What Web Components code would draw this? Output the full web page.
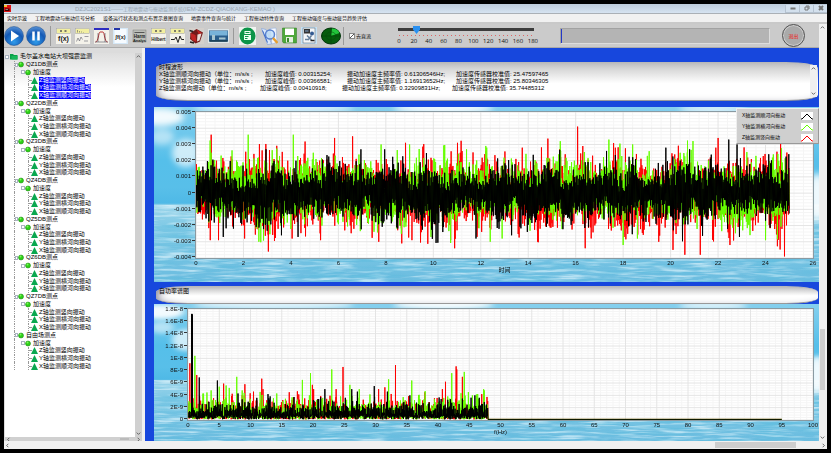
<!DOCTYPE html>
<html lang="zh-CN">
<head>
<meta charset="utf-8">
<title>DZJC2021S1</title>
<style>
  html, body { height: 100%; }
  body {
    margin: 0;
    background: #000;
    color: #111;
    font: 6px/8px 'Liberation Sans', 'Noto Sans CJK SC', sans-serif;
  }
</style>
</head>
<body>
<monitor-app></monitor-app>

<script>
const define = (name, html, setup) => {
  const template = document.createElement('template');
  template.innerHTML = html;
  window.customElements.define(name, class extends HTMLElement {
    constructor() {
      super();
      this.attachShadow({ mode: 'open' });
      this.shadowRoot.appendChild(template.content.cloneNode(true));
    }

    connectedCallback() {
      if (setup) setup(this, this.shadowRoot);
    }
  });
};

// small repeatable random generator, so the traces stay the same on reload
const random = seed => () => {
  seed = (seed * 1664525 + 1013904223) % 4294967296;
  return seed / 4294967296;
};

/* ---------- scroll bar ---------- */
define('scroll-bar', `
  <style>
    :host { display: flex; background: #f0f0f0; }
    :host([vertical]) { flex-direction: column; width: 7px; }
    :host(:not([vertical])) { height: 8px; }
    svg { width: 7px; height: 7px; flex: none; align-self: center; fill: none; stroke: #555; }
    .thumb { background: var(--thumb, #cdcdcd); }
    :host([vertical]) .thumb { margin: 0 1px; }
    :host(:not([vertical])) .thumb { margin: 1px 0; }
  </style>
  <svg viewBox="0 0 8 8"><path id="a"/></svg>
  <div id="before"></div><div class="thumb"></div><div id="after"></div>
  <svg viewBox="0 0 8 8"><path id="b"/></svg>
`, (el, root) => {
  const vertical = el.hasAttribute('vertical');
  root.querySelector('#a').setAttribute('d', vertical ? 'M2 5l2-2 2 2' : 'M5 2l-2 2 2 2');
  root.querySelector('#b').setAttribute('d', vertical ? 'M2 3l2 2 2-2' : 'M3 2l2 2-2 2');
  const start = Number(el.getAttribute('start') || 0);
  const size = Number(el.getAttribute('size') || 0);
  root.querySelector('#before').style.flex = start;
  root.querySelector('.thumb').style.flex = size;
  root.querySelector('#after').style.flex = 100 - start - size;
});

/* ---------- title bar ---------- */
define('title-bar', `
  <style>
    :host { display: flex; align-items: center; height: 10px; background: linear-gradient(#bccbda, #d6e3f1); border-bottom: 1px solid #aab0b6; box-sizing: border-box; }
    .logo { width: 7px; height: 7px; }
    h1 { flex: 1; margin: 0 0 0 64px; font: 6px/8px 'Liberation Sans', 'Noto Sans CJK SC', sans-serif; color: #98a4b0; white-space: pre; }
    h1 span { font-size: 5px; }
    button { width: 14px; height: 8px; padding: 0; border: 1px solid #b5c2d0; border-width: 0 0 1px 1px; background: #d3e0ed; display: flex; justify-content: center; align-items: center; }
    button svg { width: 8px; height: 6px; fill: none; stroke: #777; }
  </style>
  <svg class="logo" viewBox="0 0 14 14"><rect width="14" height="14" fill="#d11"/><path d="M0 0h6v4H0z" fill="#f6c22d"/><path d="M2 7h9v5H2z" fill="#400"/><path d="M3 9h5" stroke="#fff"/></svg>
  <h1>DZJC2021S1------<span><slot></slot></span>(IEM-ZCDZ-QIAOKANG-KEMAO )</h1>
  <button aria-label="最小化"><svg viewBox="0 0 8 6"><rect x="2" y="3" width="4" height="1"/></svg></button>
  <button aria-label="还原"><svg viewBox="0 0 8 6"><path d="M2 2h3v3H2zM3 1h3v3"/></svg></button>
  <button aria-label="关闭"><svg viewBox="0 0 8 6"><path d="M2 1l4 4M6 1L2 5" stroke-width="2"/></svg></button>
`);

/* ---------- menu ---------- */
define('menu-bar', `
  <style>
    :host { display: block; background: #f1f1f1; border-bottom: 2px solid #c9c9c9; }
    nav { display: flex; gap: 8px; padding: 0 3px; }
    button { border: 0; padding: 0; background: none; font: 5px/8px 'Noto Sans CJK SC', sans-serif; color: #000; white-space: nowrap; }
  </style>
  <nav>
    <button>实时示波</button>
    <button>工程地震动与振动信号分析</button>
    <button>设备运行状态和测点布置示意图查询</button>
    <button>地震事件查询与统计</button>
    <button>工程振动特性查询</button>
    <button>工程振动强度与振动疲劳趋势评估</button>
  </nav>
`);

/* ---------- toolbar ---------- */
const page = body => `<rect width="30" height="32" fill="#f4f2ea"/>${body}`;
const banner = '<rect x="1" y="1" width="28" height="10" fill="#f2efa0" stroke="#99a"/><path d="M8 6h4M17 6h4" stroke="#555" stroke-width="3"/>';
const caption = (text, size, y) => `<text x="15" y="${y}" font-size="${size}" font-weight="bold" text-anchor="middle" fill="#222">${text}</text>`;

const ICONS = {
  play: '<circle cx="20" cy="20" r="19" fill="url(#orb)" stroke="#1a4d8c"/><path d="M14 9l16 11-16 11z" fill="#fff"/>',
  pause: '<circle cx="20" cy="20" r="19" fill="url(#orb)" stroke="#1a4d8c"/><path d="M15 11v18M25 11v18" stroke="#fff" stroke-width="5"/>',
  func: page(banner + caption('f(x)', 14, 26)),
  filter: page('<rect x="1" y="1" width="28" height="10" fill="#f2efa0" stroke="#99a"/><path d="M5 4v5M9 6v3M13 7v2M17 8v1M3 27l3-7 3 6 3-8 3 5M18 26h8M19 17h8" stroke="#445" fill="none"/>'),
  windowing: page('<rect width="30" height="4" fill="#2c2cc0"/><path d="M3 28c6 0 6-20 9-20h6c3 0 3 20 9 20" fill="none" stroke="#b33" stroke-width="2"/><path d="M8 28V10M22 28V10M2 28h26" stroke="#334"/>'),
  integral: '<rect width="30" height="32" fill="#d5e8f7"/><rect x="3" y="2" width="24" height="28" fill="#f7fbff"/><path d="M2 2h12" stroke="#2435a8" stroke-width="4"/>' + caption('∫f(x)', 11, 21),
  params: '<rect width="30" height="32" fill="#cfcfcb"/><rect x="2" y="4" width="26" height="24" fill="#bbbeb8" stroke="#777"/><path d="M5 9h20" stroke="#555" stroke-width="2"/>' + caption('Harm', 9, 19) + caption('Analys', 8, 27),
  hilbert: page(banner + caption('Hilbert', 9, 25)),
  pulse: page(banner + '<path d="M2 23h7l3-5 4 11 4-13 3 7h5" fill="none" stroke="#222" stroke-width="2"/>'),
  book: '<rect width="30" height="32" fill="#d4d0cc"/><path d="M3 10L15 2l13 7-6 18-9 4L2 22z" fill="#711a1a"/><path d="M3 10l10 4 2 14-10-5zM15 3l11 7-6 3z" fill="#c02424"/><path d="M17 13l8-2-4 14-5 2z" fill="#e9dcd6"/><path d="M1 5l7 2M2 28l8 2" stroke="#222" stroke-width="3"/>',
  photo: '<rect y="2" width="42" height="28" fill="#dfe7ea"/><rect x="2" y="5" width="38" height="22" fill="#2a5e8b"/><path d="M3 6h36v9H3z" fill="#78b3d9"/><path d="M8 24V14h6v10M22 19h13v4H22z" fill="#a9c6cf"/><path d="M3 26h36" stroke="#173a4d" stroke-width="3"/>',
  report: '<rect width="34" height="36" fill="#f1f3f1"/><ellipse cx="17" cy="18" rx="16" ry="17" fill="#0c9448"/><path d="M11 8h12v6H11zM10 16h14v10H10z" fill="#eafff2"/><path d="M12 19h7M12 23h5M13 11h8" stroke="#0c9448" stroke-width="2"/>',
  search: '<path d="M3 3l9 2 11 29-8 1z" fill="#dbe9fb" stroke="#6c93d6"/><path d="M20 3l12-1 2 28-10 4z" fill="#f5f8ff" stroke="#89a9dd"/><circle cx="20" cy="15" r="9" fill="#bfe0fb" fill-opacity=".8" stroke="#5a82cf" stroke-width="3"/><path d="M26 22l9 10" stroke="#e79f2f" stroke-width="5"/><path d="M5 7l10 24" stroke="#3b68c4" stroke-width="2"/>',
  save: '<path d="M1 2h28v30H3l-2-3z" fill="#4fa83b" stroke="#2c7a21"/><path d="M6 3h18v13H6z" fill="#fff"/><path d="M8 20h14v11H8z" fill="#e4efe0"/><path d="M10 22h4v8h-4z" fill="#3b8a2c"/>',
  config: '<rect width="32" height="34" fill="#c6e2f5"/><rect x="4" y="2" width="24" height="30" fill="#f4f7f9" stroke="#456"/><rect x="6" y="4" width="12" height="9" fill="#333"/><path d="M8 8h7M8 25h8M12 17l9 9M21 17l-7 9" stroke="#67809b" stroke-width="3"/><circle cx="22" cy="13" r="4" fill="#335a91"/><path d="M19 27h8" stroke="#222" stroke-width="3"/>',
  radar: '<ellipse cx="20" cy="18" rx="19" ry="16" fill="#055c0c" stroke="#02340a" stroke-width="2"/><path d="M20 18L22 3c8 0 13 4 15 9z" fill="#22c43b"/><path d="M2 18h36M20 3v30" stroke="#063f0b"/><ellipse cx="20" cy="18" rx="10" ry="8" fill="none" stroke="#08470d"/>'
};

define('tool-button', `
  <style>
    :host { display: block; flex: none; }
    button { display: block; border: 0; padding: 0; background: none; }
    svg { display: block; font-family: 'Liberation Sans', sans-serif; }
  </style>
  <button><svg>
    <defs><radialGradient id="orb" cx=".5" cy=".8" r=".8"><stop offset="0" stop-color="#2f9bea"/><stop offset=".6" stop-color="#1459b5"/><stop offset="1" stop-color="#5a93d6"/></radialGradient></defs>
    <g></g>
  </svg></button>
`, (el, root) => {
  const [width, height] = (el.getAttribute('size') || '15 16').split(' ');
  const svg = root.querySelector('svg');
  svg.setAttribute('width', width);
  svg.setAttribute('height', height);
  svg.setAttribute('viewBox', `0 0 ${width * 2} ${height * 2}`);
  root.querySelector('g').innerHTML = ICONS[el.getAttribute('icon')];
  root.querySelector('button').setAttribute('aria-label', el.getAttribute('label'));
});

define('range-scale', `
  <style>
    :host { display: block; width: 144px; }
    input { appearance: none; display: block; width: 100%; height: 8px; margin: 0; background: linear-gradient(#3c3c3c, #3c3c3c) center 2px / 136px 3px no-repeat; }
    input::-webkit-slider-thumb { appearance: none; width: 7px; height: 8px; background: #2a90f0; clip-path: polygon(0 0, 100% 0, 100% 45%, 50% 100%, 0 45%); }
    .ticks { height: 3px; margin: 0 5px; background: repeating-linear-gradient(90deg, #d66 0 1px, transparent 1px 4px) 0 1px / 100% 1px no-repeat; }
    .labels { display: flex; justify-content: space-between; margin: 0 5px; }
    .labels span { width: 0; display: flex; justify-content: center; font: 6px/8px 'Open Sans', sans-serif; }
  </style>
  <input type="range" min="0" max="180" value="25" aria-label="时长">
  <div class="ticks"></div>
  <div class="labels"></div>
`, (el, root) => {
  const labels = [];
  for (let i = 0; i <= 180; i += 20) labels.push(`<span>${i}</span>`);
  root.querySelector('.labels').innerHTML = labels.join('');
});

define('tool-bar', `
  <style>
    :host { display: flex; align-items: center; height: 24px; background: #cbcbcb; border-bottom: 1px solid #aaa; box-sizing: border-box; }
    .group { display: flex; align-items: center; gap: 4px; padding: 0 4px 0 5px; border-right: 1px solid #999; }
    .run { gap: 2px; padding: 0 4px 0 0; }
    .last { padding-right: 2px; }
    label { display: flex; align-items: center; gap: 1px; width: 50px; padding-left: 5px; box-sizing: border-box; font: 5px/8px 'Noto Sans CJK SC', sans-serif; }
    input { appearance: none; width: 6px; height: 6px; margin: 0; border: 1px solid #888; background: #fff; box-sizing: border-box; }
    input:checked { background: linear-gradient(135deg, #fff 40%, #555 40% 60%, #fff 60%); }
    .progress { flex: 1; height: 14px; margin: 0 12px 0 22px; background: #b4b4b4; border: 1px solid #a2a2a2; border-right-color: #ddd; border-bottom-color: #ddd; }
    .progress div { width: 1px; height: 100%; background: #2338c8; }
    .exit { width: 23px; height: 23px; margin-right: 14px; padding: 0; border: 1px solid #555; border-radius: 50%; background: #aaa; box-shadow: inset 0 0 0 1px #ccc; color: #f01818; font: 5px/8px 'Noto Sans CJK SC', sans-serif; }
  </style>
  <div class="group run">
    <tool-button icon="play" size="20 20" label="开始"></tool-button>
    <tool-button icon="pause" size="20 20" label="暂停"></tool-button>
  </div>
  <div class="group">
    <tool-button icon="func" label="函数"></tool-button>
    <tool-button icon="filter" label="滤波"></tool-button>
    <tool-button icon="windowing" label="加窗"></tool-button>
    <tool-button icon="integral" label="积分"></tool-button>
    <tool-button icon="params" label="谐波分析"></tool-button>
    <tool-button icon="hilbert" label="希尔伯特"></tool-button>
    <tool-button icon="pulse" label="脉冲"></tool-button>
    <tool-button icon="book" label="文档"></tool-button>
    <tool-button icon="photo" size="21 16" label="图片"></tool-button>
  </div>
  <div class="group last">
    <tool-button icon="report" size="17 18" label="报告"></tool-button>
    <tool-button icon="search" size="18 18" label="查询"></tool-button>
    <tool-button icon="save" size="15 17" label="保存"></tool-button>
    <tool-button icon="config" size="16 17" label="设置"></tool-button>
    <tool-button icon="radar" size="20 18" label="扫描"></tool-button>
  </div>
  <label><input type="checkbox" checked>去直流</label>
  <range-scale></range-scale>
  <div class="progress"><div></div></div>
  <button class="exit">退出</button>
`);

/* ---------- point tree ---------- */
define('tree-row', `
  <style>
    :host { display: flex; flex: 1; align-items: center; padding-left: 9px; white-space: nowrap; color: #000; font: 6px/7px 'Liberation Sans', 'Noto Sans CJK SC', sans-serif; }
    :host([level="0"]) { padding-left: 0; }
    i { align-self: stretch; box-sizing: border-box; flex: none; }
    .trunk { border-left: 1px dotted #999; }
    .joint { display: flex; align-items: center; }
    .joint::before { content: ''; width: 100%; border-top: 1px dotted #999; }
    .box::before { width: 2px; height: 2px; border: 1px solid #a9b3c0; background: #fff; }
    svg { flex: none; height: 7px; }
    :host([selected]) span { background: #00f; color: #fff; }
  </style>
  <svg></svg><span><slot></slot></span>
`, (el, root) => {
  const level = el.getAttribute('level');
  const guides = {
    0: '<i class="joint box" style="width:5px"></i>',
    1: '<i class="trunk joint box" style="width:4px"></i>',
    2: '<i class="trunk" style="width:7px"></i><i class="joint box" style="width:4px"></i>',
    3: '<i class="trunk" style="width:14px"></i><i class="trunk joint" style="width:3px"></i>'
  };
  const shapes = {
    0: '<path d="M0 2h6l2 2h7v9H0z" fill="#0aa148"/><path d="M3 6h12v7H3z" fill="#18b75a"/>',
    1: '<circle cx="6" cy="7" r="5" fill="#2bd015" stroke="#1a7a12"/><circle cx="5" cy="5" r="2" fill="#7cf55c"/>',
    2: '<circle cx="6" cy="7" r="5" fill="#2bd015" stroke="#1a7a12"/><circle cx="5" cy="5" r="2" fill="#7cf55c"/>',
    3: '<path d="M7 0l7 14H0z" fill="#0aa84f"/>'
  };
  const width = { 0: 8, 1: 6, 2: 6, 3: 7 }[level];
  const svg = root.querySelector('svg');
  svg.innerHTML = shapes[level];
  svg.setAttribute('width', width);
  svg.setAttribute('viewBox', `0 0 ${width * 2} 14`);
  svg.style.marginRight = level === '3' ? '1px' : '2px';
  svg.insertAdjacentHTML('beforebegin', guides[level]);
});

define('point-tree', `
  <style>
    :host { display: flex; flex-direction: column; width: 138px; box-sizing: border-box; padding: 5px 0 0 1px; background: #dcdcdc; }
    .body { flex: 1; display: flex; min-height: 0; }
    .rows { flex: 1; display: flex; flex-direction: column; padding-bottom: 67px; overflow: hidden; background: linear-gradient(#dedede, #fff 34px); }
    scroll-bar { background: #d0d0d0; --thumb: #d0d0d0; }
    .foot { height: 4px; --thumb: #bbb; }
  </style>
  <div class="body"><div class="rows" role="tree"></div><scroll-bar vertical start="0" size="0"></scroll-bar></div>
  <scroll-bar class="foot" start="88" size="7"></scroll-bar>
`, (el, root) => {
  const sites = ['QZ1DB测点', 'QZ2DB测点', 'QZ3DB测点', 'QZ4DB测点', 'QZ5DB测点', 'QZ6DB测点', 'QZ7DB测点', '自由场测点'];
  const axes = ['Z轴监测竖向振动', 'Y轴监测横河向振动', 'X轴监测顺河向振动'];
  const row = (level, text, extra = '') => `<tree-row role="treeitem" level="${level}" ${extra}>${text}</tree-row>`;
  root.querySelector('.rows').innerHTML = row(0, '毛尔盖水电站大坝强震监测') + sites.map((site, i) =>
    row(1, site) + row(2, '加速度') + axes.map(axis => row(3, axis, i === 0 ? 'selected' : '')).join('')
  ).join('');
});

/* ---------- metal panels above the charts ---------- */
define('info-panel', `
  <style>
    :host { display: flex; margin: 0 1px 0 2px; padding: 1px 0 0 3px; box-sizing: border-box; border-radius: 32px / 6px; border-top: 1px solid #b9b9b9; border-bottom: 1px solid #999; background: linear-gradient(#c6c6c6, #fff 55%); box-shadow: inset 6px 0 8px -4px #889; white-space: nowrap; }
    .text { flex: 1; color: #000; font: 6px/7px 'Liberation Sans', 'Noto Sans CJK SC', sans-serif; }
  </style>
  <div class="text"><slot></slot></div>
  <slot name="scroll"></slot>
`);

define('reading-row', `
  <style>
    :host { display: grid; grid-template-columns: 106px 82px 109px 1fr; white-space: pre; line-height: 7px; }
    :host([short]) { grid-template-columns: 101px 82px 110px 1fr; }
  </style>
  <span><slot></slot>（单位：m/s/s ;</span>
  <span>加速度峰值: <slot name="peak"></slot>;</span>
  <span>振动加速度主频率值: <slot name="freq"></slot>Hz;</span>
  <span>加速度传感器校准值: <slot name="cal"></slot></span>
`);

/* ---------- chart ---------- */
define('sea-backdrop', `
  <style>
    :host { display: block; overflow: hidden; background: linear-gradient(#86d0ee, #55bfea 30%, #58bfe9 46%, #4fb9e6 55%, #9ad4ea 56%, #7cc8e5 70%, #6cbde0); }
    svg { display: block; width: 100%; height: 100%; }
  </style>
  <svg preserveAspectRatio="none" viewBox="0 0 666 175">
    <defs>
      <filter id="waves" x="0" y="0" width="100%" height="100%">
        <feTurbulence type="fractalNoise" baseFrequency=".03 .35" numOctaves="3" seed="4"/>
        <feColorMatrix values="0 0 0 0 .82  0 0 0 0 .95  0 0 0 0 1  3 0 0 0 -1.3"/>
      </filter>
      <filter id="deep" x="0" y="0" width="100%" height="100%">
        <feTurbulence type="fractalNoise" baseFrequency=".02 .25" numOctaves="3" seed="9"/>
        <feColorMatrix values="0 0 0 0 .1  0 0 0 0 .5  0 0 0 0 .72  3 0 0 0 -1.4"/>
      </filter>
      <filter id="soft" x="-30%" y="-50%" width="160%" height="200%"><feGaussianBlur stdDeviation="3"/></filter>
    </defs>
    <g fill="#fff" filter="url(#soft)">
      <ellipse cx="6" cy="10" rx="24" ry="9" opacity=".9"/>
      <ellipse cx="8" cy="30" rx="12" ry="8" opacity=".5"/>
      <ellipse cx="32" cy="46" rx="14" ry="14" opacity=".7"/>
      <ellipse cx="120" cy="1" rx="80" ry="6" opacity=".7"/>
      <ellipse cx="290" cy="1" rx="50" ry="6" opacity=".9"/>
      <ellipse cx="560" cy="2" rx="34" ry="5" opacity=".7"/>
      <ellipse cx="664" cy="90" rx="9" ry="24" opacity=".9"/>
    </g>
    <rect y="98" width="666" height="77" filter="url(#waves)" opacity=".6"/>
    <rect y="118" width="666" height="57" filter="url(#deep)" opacity=".5"/>
  </svg>
`);

define('signal-chart', `
  <style>
    :host { display: grid; min-height: 0; }
    sea-backdrop, .frame { grid-area: 1 / 1; min-height: 0; }
    .frame { z-index: 1; display: grid; grid-template-columns: var(--axis) 1fr; grid-template-rows: 1fr 9px auto; padding: 5px 6px 0 0; font: 6px/7px 'Liberation Sans', sans-serif; }
    .y { display: flex; flex-direction: column; justify-content: space-between; margin: -3px 0; text-align: right; }
    .y span::after { content: ''; display: inline-block; width: 3px; height: 1px; margin: 0 1px 2px; background: #333; }
    svg { display: block; width: 100%; height: 100%; min-height: 0; background: #fff; box-shadow: 0 0 0 1px #8a9aa2; }
    .plot { min-height: 0; position: relative; }
    .plot svg { position: absolute; }
    .x { grid-column: 2; display: flex; justify-content: space-between; padding-top: 2px; }
    .x span { width: 0; display: flex; justify-content: center; }
    .name { grid-column: 2; text-align: center; height: var(--foot); font-family: 'Liberation Sans', 'Noto Sans CJK SC', sans-serif; }
  </style>
  <sea-backdrop></sea-backdrop>
  <div class="frame">
    <div class="y"></div>
    <div class="plot"><svg preserveAspectRatio="none" viewBox="0 0 1000 1000"></svg></div>
    <div class="x"></div>
    <div class="name"><slot></slot></div>
  </div>
`, (el, root) => {
  const chart = CHARTS[el.getAttribute('kind')];
  root.querySelector('.y').innerHTML = chart.y.map(t => `<span>${t}</span>`).join('');
  const x = [];
  for (let t = 0; t <= chart.xMax; t += chart.xStep) x.push(`<span>${t}</span>`);
  root.querySelector('.x').innerHTML = x.join('');

  const sx = t => (t / chart.xMax * 1000).toFixed(1);
  const sy = v => ((chart.top - v) / (chart.top - chart.bottom) * 1000).toFixed(1);
  const line = (d, color, width) => `<path d="${d}" fill="none" stroke="${color}" stroke-width="${width}" stroke-linejoin="bevel" vector-effect="non-scaling-stroke"/>`;

  let minor = '';
  let major = '';
  const cols = (x.length - 1) * 5;
  const rows = (chart.y.length - 1) * 5;
  for (let i = 0; i <= cols; i++) {
    const d = `M${i * 1000 / cols} 0V1000`;
    if (i % 5) minor += d; else major += d;
  }
  for (let i = 0; i <= rows; i++) {
    const d = `M0 ${i * 1000 / rows}H1000`;
    if (i % 5) minor += d; else major += d;
  }

  let svg = line(minor, '#f5f5f5', 1) + line(major, '#e4e4e4', 1);
  chart.series.forEach(s => {
    svg += line('M' + chart.trace(s).map(([t, v]) => `${sx(t)} ${sy(v)}`).join('L'), s.color, 1);
  });
  root.querySelector('svg').innerHTML = svg;
});

// adds the outstanding peaks to a trace and keeps it ordered by time
const withPeaks = (points, peaks, base) => {
  peaks.forEach(([t, v]) => points.push([t - 0.01, base], [t, v], [t + 0.01, base]));
  return points.sort((a, b) => a[0] - b[0]);
};

// values in units of 0.001
const timeTrace = ({ seed, low, high, peaks }) => {
  const next = random(seed);
  const points = [];
  let swell = 1;
  let target = 1;
  let drift = 0;
  let center = 0;
  const count = 1300;
  for (let i = 0; i <= count; i++) {
    if (i % 20 === 0) {
      target = 0.65 + next() * 0.75;
      center = (next() - 0.5) * 0.7;
    }
    swell += (target - swell) * 0.12;
    drift += (center - drift) * 0.12;
    const size = (0.3 + 0.9 * next() + 1.1 * Math.pow(next(), 4)) * swell;
    points.push([i / count * 25, drift + (i % 2 ? size * high : -size * low)]);
  }
  return withPeaks(points, peaks, 0);
};

// values in units of 1E-9
const powerTrace = ({ seed, high, peaks }) => {
  const next = random(seed);
  const points = [];
  const count = 900;
  for (let i = 0; i <= count; i++) {
    const size = 0.4 + 1.7 * next() + 2.3 * Math.pow(next(), 4);
    points.push([0.1 + i / count * 47.9, i % 2 ? size * high : 0.1 + next() * 0.7]);
  }
  points.push([48, 0.1], [95, 0.1]);
  return withPeaks(points, peaks, 0.8);
};

const CHARTS = {
  time: {
    y: ['0.005', '0.004', '0.003', '0.002', '0.001', '0', '-0.001', '-0.002', '-0.003', '-0.004'],
    top: 5, bottom: -4, xMax: 26, xStep: 2, trace: timeTrace,
    series: [
      { color: '#f00', seed: 11, low: 1.3, high: 1.25, peaks: [[0.64, 3.6], [5.84, 3.4], [6.6, 3.5], [8.83, 3.1], [13.75, 2.8], [16.08, 4.1], [16.3, 2.9], [22, 3.4], [24.9, 2.5], [0.6, -2.9], [0.95, -2.9], [2.05, -2.8], [3.05, -3.6], [4.05, -2.8], [5.25, -2.9], [7.7, -3], [8.67, -3.1], [9.1, -2.9], [10.9, -3.4], [14.4, -3], [16.4, -3.4], [19.5, -3], [20.1, -3.5], [20.6, -3.8], [21.25, -3.8], [22.5, -3.2], [24.8, -3.9]] },
      { color: '#6f0', seed: 27, low: 1.1, high: 1.25, peaks: [[2.2, 3.6], [4.1, 3.6], [7.8, 3], [9, 3], [11.4, 2.7], [12.25, 2.8], [15.35, 3.2], [17.4, 3.3], [18.4, 3], [20.7, 2.5], [2.65, -3], [9.9, -2.7], [12.4, -3], [12.9, -2.8], [18, -3.2], [18.6, -2.8], [24, -2.9]] },
      { color: '#000', seed: 52, low: 1.05, high: 1.05, peaks: [[2.95, 2.7], [6.95, 2.7], [7.95, 2.7], [17.3, 2.6], [19.8, 2.8], [20.8, 2.7], [22.45, 3.3], [22.8, 3], [24.98, 2.4], [1.15, -2.7], [3.6, -2.6], [4.3, -2.7], [10.4, -2.4], [11.8, -2.8], [13.3, -2.6], [22.4, -2.2], [22.9, -2.7]] }
    ]
  },
  power: {
    y: ['1.8E-8', '1.6E-8', '1.4E-8', '1.2E-8', '1E-8', '8E-9', '6E-9', '4E-9', '2E-9', '0'],
    top: 18, bottom: 0, xMax: 100, xStep: 5, trace: powerTrace,
    series: [
      { color: '#f00', seed: 5, high: 1.1, peaks: [[0.3, 9.2], [1.4, 7.3], [5.7, 5.9], [9.1, 5.8], [11.8, 6.7], [12, 5], [16.2, 4.5], [19.9, 5.7], [20.1, 5], [23.7, 5], [24.8, 8.6], [30.5, 5], [31.5, 5.3], [33.2, 8.9], [37.9, 4.5], [40.7, 5], [41.2, 6.2], [42.9, 8.7], [43, 8.2], [43.9, 7], [47, 4.2]] },
      { color: '#6f0', seed: 8, high: 1.15, peaks: [[1.1, 10.4], [3.7, 4.8], [5, 5.4], [6.1, 5.6], [6.6, 5.2], [7.8, 7], [18.3, 6.5], [19.6, 7.6], [23, 8.2], [25.9, 5.7], [27.4, 5], [32.1, 6.6], [35.8, 6.4], [42.2, 7.6], [44.2, 7.8], [45.5, 4], [47.3, 5], [47.4, 4.8]] },
      { color: '#000', seed: 14, high: 0.95, peaks: [[0.6, 17.2], [0.65, 17.2], [0.7, 17], [1.8, 6.9], [4.7, 6.4], [8, 4.3], [12.8, 4.2], [21.9, 5], [26.2, 5], [27.1, 4.6], [29.8, 5.5], [31.9, 4.6], [35.5, 4], [45.9, 4], [46.6, 3.6]] }
    ]
  }
};

define('chart-legend', `
  <style>
    :host { display: block; padding: 1px 5px 0 5px; background: #cfcfcf; border: 1px solid #eee; border-right-color: #999; border-bottom-color: #999; }
    ul { margin: 0; padding: 0; list-style: none; }
    li { display: flex; justify-content: space-between; align-items: center; width: 71px; height: 11px; color: #000; font: 5px/7px 'Liberation Sans', 'Noto Sans CJK SC', sans-serif; }
    svg { width: 12px; height: 8px; background: #fff; fill: none; }
  </style>
  <ul>
    <li>X轴监测顺河向振动 <svg viewBox="0 0 12 8" stroke="#000"><path d="M0 7h1l5-5 5 5h1"/></svg></li>
    <li>Y轴监测横河向振动 <svg viewBox="0 0 12 8" stroke="#6f0"><path d="M0 7h1l5-5 5 5h1"/></svg></li>
    <li>Z轴监测竖向振动 <svg viewBox="0 0 12 8" stroke="#f00"><path d="M0 7h1l5-5 5 5h1"/></svg></li>
  </ul>
`);

/* ---------- app shell ---------- */
define('monitor-app', `
  <style>
    :host { display: flex; flex-direction: column; height: 100%; padding: 4px; box-sizing: border-box; }
    .client { flex: 1; display: flex; min-height: 0; background: #f0f0f0; padding-right: 1px; }
    .main { flex: 1; display: flex; flex-direction: column; min-width: 0; }
    .work { flex: 1; display: flex; min-height: 0; background: #f0f0f0; gap: 3px; }
    .charts { flex: 1; display: flex; flex-direction: column; min-width: 0; padding: 14px 0 0 9px; background: #1747dd; }
    .readings { height: 39px; }
    .spectrum { height: 18px; margin-top: 4px; }
    .time { display: grid; flex: 175; margin-top: 6px; --axis: 42px; --foot: 15px; position: relative; }
    .power { flex: 137; --axis: 34px; --foot: 12px; }
    chart-legend { position: absolute; z-index: 2; top: 1px; right: 0; }
    .readings scroll-bar { margin: 1px 1px 3px 0; }
  </style>
  <title-bar>工程地震动与振动监测系统</title-bar>
  <menu-bar></menu-bar>
  <div class="client">
    <div class="main">
      <tool-bar></tool-bar>
      <div class="work">
        <point-tree></point-tree>
        <div class="charts">
          <info-panel class="readings">
            <div>时程波形</div>
            <reading-row>X轴监测顺河向振动<span slot="peak">0.00315254</span><span slot="freq">0.61306546</span><span slot="cal">25.47597465</span></reading-row>
            <reading-row>Y轴监测横河向振动<span slot="peak">0.00366581</span><span slot="freq">1.16913652</span><span slot="cal">25.80346305</span></reading-row>
            <reading-row short>Z轴监测竖向振动<span slot="peak">0.00410918</span><span slot="freq">0.32909831</span><span slot="cal">35.74485312</span></reading-row>
            <scroll-bar slot="scroll" vertical></scroll-bar>
          </info-panel>
          <div class="time">
            <signal-chart kind="time">时间</signal-chart>
            <chart-legend></chart-legend>
          </div>
          <info-panel class="spectrum">自功率谱图</info-panel>
          <signal-chart class="power" kind="power">f(Hz)</signal-chart>
        </div>
      </div>
    </div>
    <scroll-bar vertical start="74" size="15"></scroll-bar>
  </div>
  <scroll-bar start="87" size="10"></scroll-bar>
`);
</script>
</body>
</html>
